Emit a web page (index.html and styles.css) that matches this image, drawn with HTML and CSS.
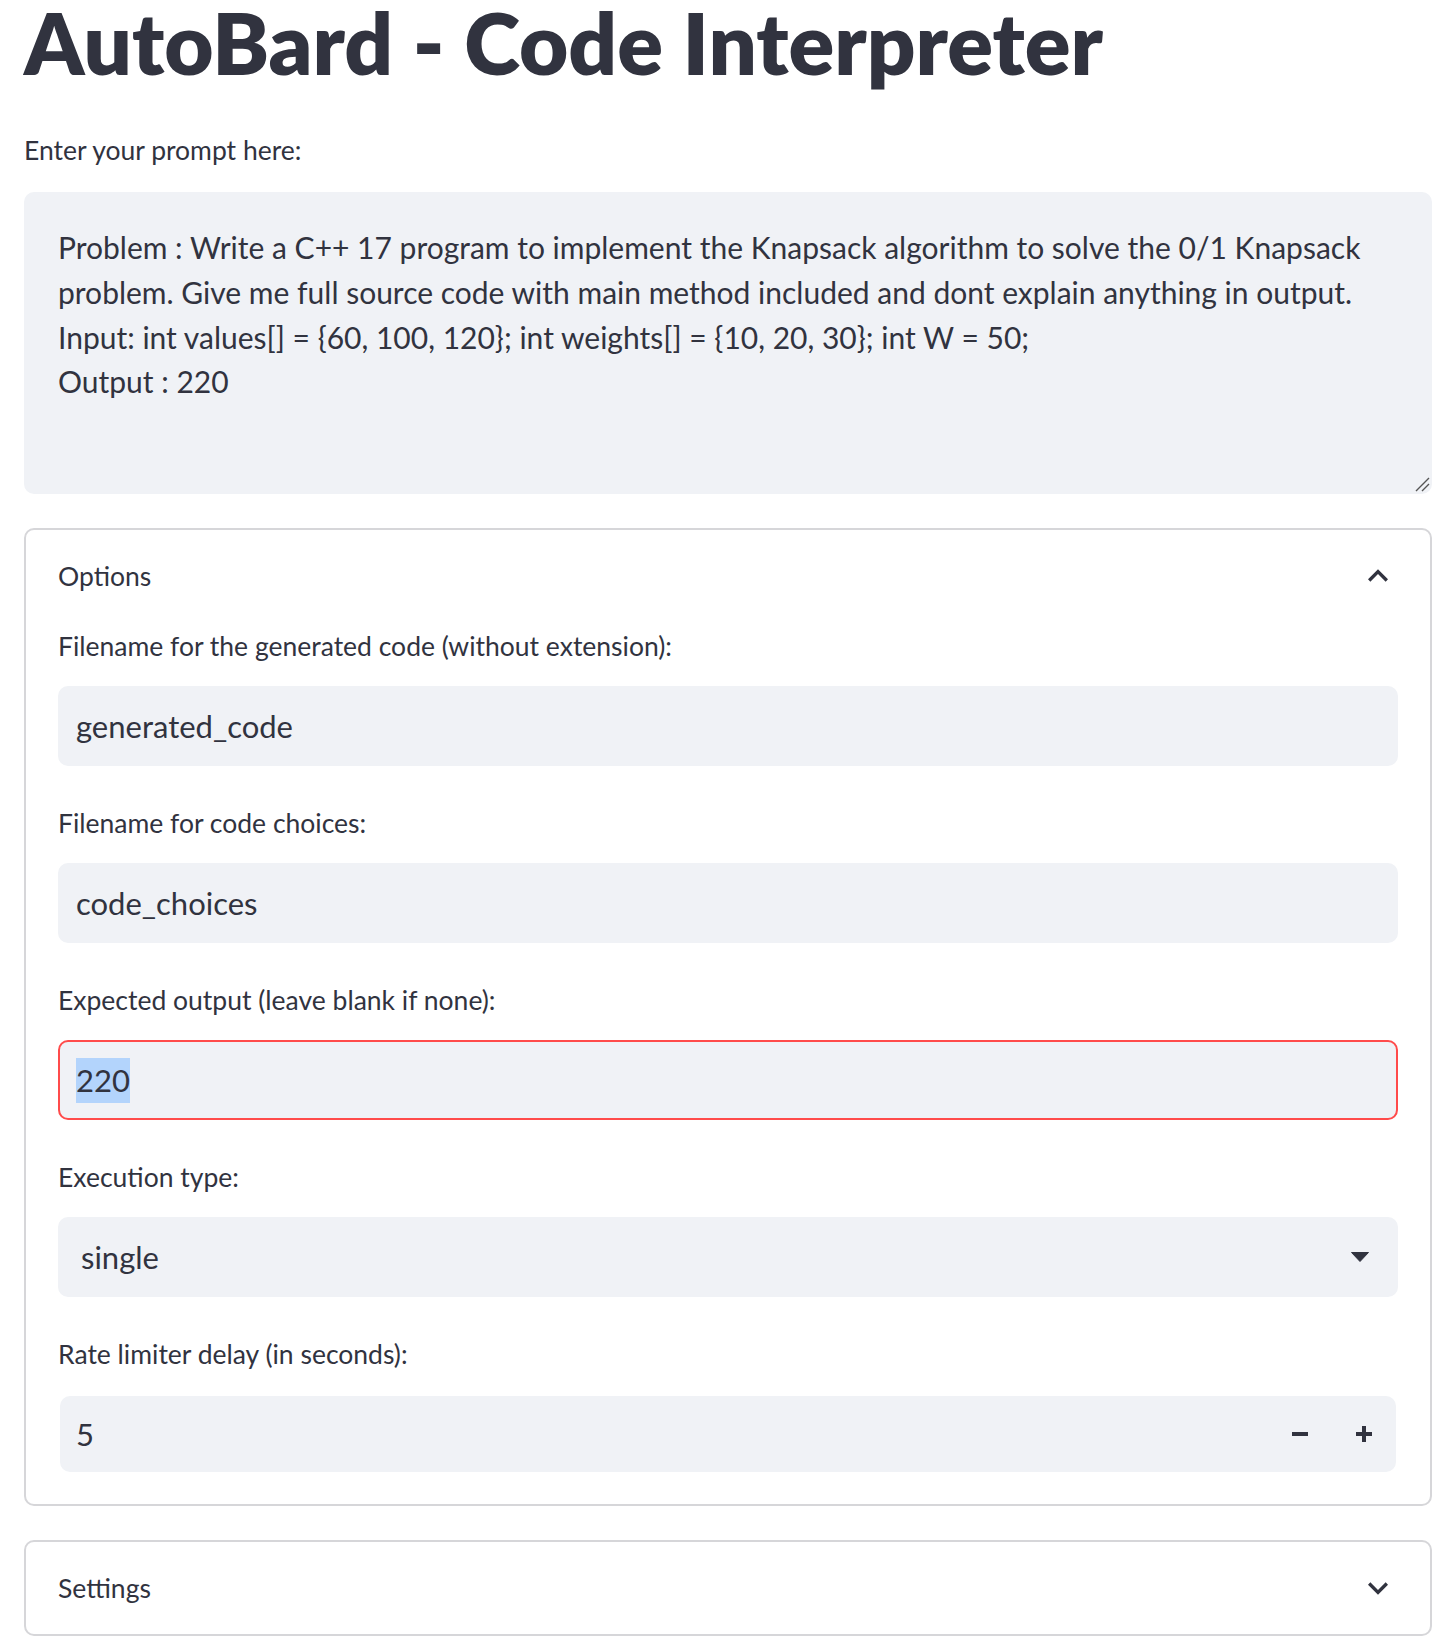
FILE: index.html
```html
<!DOCTYPE html>
<html lang="en">
<head>
<meta charset="utf-8">
<title>AutoBard - Code Interpreter</title>
<link rel="stylesheet" href="styles.css">
</head>
<body>
<main class="page">
  <h1 class="title">AutoBard - Code Interpreter</h1>

  <div class="field prompt-field">
    <div class="label">Enter your prompt here:</div>
    <div class="textarea">
      <div class="textarea-text">Problem : Write a C++ 17 program to implement the Knapsack algorithm to solve the 0/1 Knapsack problem. Give me full source code with main method included and dont explain anything in output.<br>Input: int values[] = {60, 100, 120}; int weights[] = {10, 20, 30}; int W = 50;<br>Output : 220</div>
      <svg class="resize-handle" width="16" height="16" viewBox="0 0 16 16"><path d="M2 15 L15 2 M8 15 L15 8" stroke="#555555" stroke-width="1.4" fill="none"/></svg>
    </div>
  </div>

  <section class="expander">
    <div class="exp-header">
      <span class="exp-title">Options</span>
      <svg class="chevron" width="40" height="40" viewBox="0 0 24 24"><path d="M12 8l-6 6 1.41 1.41L12 10.83l4.59 4.58L18 14z" fill="#31333f"/></svg>
    </div>
    <div class="exp-body">
      <div class="field">
        <div class="label">Filename for the generated code (without extension):</div>
        <div class="input"><span class="input-text">generated_code</span></div>
      </div>
      <div class="field">
        <div class="label">Filename for code choices:</div>
        <div class="input"><span class="input-text">code_choices</span></div>
      </div>
      <div class="field">
        <div class="label">Expected output (leave blank if none):</div>
        <div class="input input-error"><span class="input-text selected">220</span></div>
      </div>
      <div class="field">
        <div class="label">Execution type:</div>
        <div class="select">
          <span class="input-text">single</span>
          <svg class="caret" width="18" height="10" viewBox="0 0 18 10"><path d="M0.5 0.5 H17.5 L9 9.5 Z" fill="#31333f" stroke="#31333f" stroke-width="1" stroke-linejoin="round"/></svg>
        </div>
      </div>
      <div class="field">
        <div class="label">Rate limiter delay (in seconds):</div>
        <div class="number-wrap">
          <div class="number">
            <span class="input-text">5</span>
            <div class="step-buttons">
              <span class="step-btn"><svg width="16" height="16" viewBox="0 0 16 16"><rect x="0" y="6" width="16" height="4" fill="#31333f"/></svg></span>
              <span class="step-btn"><svg width="16" height="16" viewBox="0 0 16 16"><rect x="0" y="6" width="16" height="4" fill="#31333f"/><rect x="6" y="0" width="4" height="16" fill="#31333f"/></svg></span>
            </div>
          </div>
        </div>
      </div>
    </div>
  </section>

  <section class="expander collapsed">
    <div class="exp-header">
      <span class="exp-title">Settings</span>
      <svg class="chevron" width="40" height="40" viewBox="0 0 24 24"><path d="M16.59 8.59L12 13.17 7.41 8.59 6 10l6 6 6-6z" fill="#31333f"/></svg>
    </div>
  </section>
</main>
</body>
</html>
```

FILE: styles.css
```css
* { box-sizing: border-box; }

html, body {
  margin: 0;
  padding: 0;
  background: #ffffff;
}

body {
  font-family: Lato, "Noto Sans", "Liberation Sans", sans-serif;
  color: #31333f;
}

.page {
  padding: 0 8px 0 24px;
  display: flex;
  flex-direction: column;
}

.title {
  margin: 0 0 45px 0;
  font-size: 85px;
  font-weight: 800;
  line-height: 84px;
  height: 84px;
  color: #31333f;
  white-space: nowrap;
}

.field {
  display: flex;
  flex-direction: column;
}

.label {
  font-size: 26.5px;
  line-height: 42px;
  height: 42px;
  margin-bottom: 19px;
  color: #31333f;
}

.prompt-field .label {
  margin-bottom: 21px;
}

.textarea {
  position: relative;
  height: 302px;
  background: #f0f2f6;
  border-radius: 10px;
  padding: 33px 34px;
}

.textarea-text {
  font-size: 30px;
  line-height: 44.8px;
  color: #31333f;
}

.resize-handle {
  position: absolute;
  right: 2px;
  bottom: 2px;
}

.expander {
  margin-top: 34px;
  border: 2px solid #d6d6d9;
  border-radius: 10px;
}

.exp-header {
  height: 92px;
  display: flex;
  align-items: center;
  justify-content: space-between;
  padding: 0 32px;
}

.exp-title {
  font-size: 26.5px;
  line-height: 42px;
}

.chevron {
  margin-right: 0;
}

.exp-body {
  padding: 3px 32px 30px 32px;
  display: flex;
  flex-direction: column;
  gap: 36px;
}

.input,
.select {
  height: 80px;
  background: #f0f2f6;
  border: 2px solid #f0f2f6;
  border-radius: 10px;
  display: flex;
  align-items: center;
  padding: 0 16px;
}

.input-error {
  border-color: #ff4b4b;
}

.input-text {
  font-size: 31px;
  line-height: 45px;
  color: #31333f;
}

.selected {
  background: #b3d4fc;
}

.select {
  justify-content: space-between;
  padding: 0 27px 0 21px;
}

.number-wrap {
  height: 80px;
  border: 2px solid #ffffff;
  border-radius: 12px;
}

.number {
  height: 100%;
  background: #f0f2f6;
  border-radius: 10px;
  display: flex;
  align-items: center;
  justify-content: space-between;
  padding-left: 16px;
}

.step-buttons {
  display: flex;
  height: 100%;
}

.step-btn {
  width: 64px;
  height: 100%;
  display: flex;
  align-items: center;
  justify-content: center;
}
```
